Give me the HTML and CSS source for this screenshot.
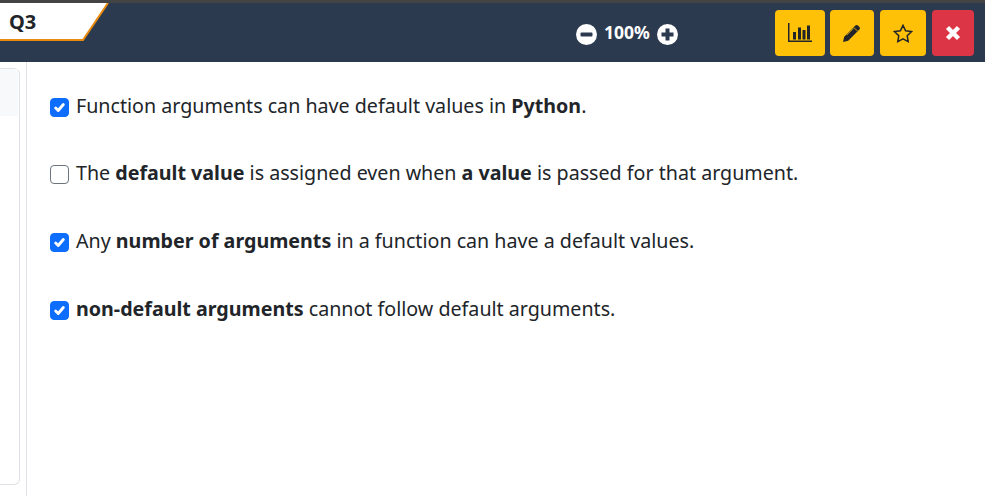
FILE: index.html
```html
<!DOCTYPE html>
<html lang="en">
<head>
    <meta charset="UTF-8">
    <meta name="viewport" content="width=device-width, initial-scale=1.0">
    <title>Quiz</title>
    <link rel="stylesheet" href="styles.css">
</head>
<body>
    <header class="top-bar">
        <div class="tab">
            <svg class="tab-shape" width="110" height="38" viewBox="0 0 110 38">
                <polygon points="0,0 108,0 83,37 0,37" fill="#fff"/>
                <polyline points="0,37 83,37 108,0" fill="none" stroke="#e88a0c" stroke-width="2"/>
            </svg>
            <span class="tab-label">Q3</span>
        </div>
        <div class="zoom">
            <svg class="zoom-icon" width="21" height="21" viewBox="0 0 21 21">
                <circle cx="10.5" cy="10.5" r="10.5" fill="#fff"/>
                <rect x="4.5" y="8.5" width="12" height="4" rx="1" fill="#2c3a50"/>
            </svg>
            <span class="zoom-value">100%</span>
            <svg class="zoom-icon" width="21" height="21" viewBox="0 0 21 21">
                <circle cx="10.5" cy="10.5" r="10.5" fill="#fff"/>
                <path d="M4.5 8.5h4v-4h4v4h4v4h-4v4h-4v-4h-4z" fill="#2c3a50"/>
            </svg>
        </div>
        <div class="actions">
            <button class="btn btn-stats">
                <svg width="24" height="20" viewBox="0 0 24 20">
                    <path d="M0 0h1.5v17.5H24V19H0z" fill="#212529"/>
                    <rect x="5" y="9" width="3" height="7.5" fill="#212529"/>
                    <rect x="10" y="4.5" width="3" height="12" fill="#212529"/>
                    <rect x="14.5" y="7" width="3" height="9.5" fill="#212529"/>
                    <rect x="19" y="2.5" width="3" height="14" fill="#212529"/>
                </svg>
            </button>
            <button class="btn btn-edit">
                <svg width="18" height="18" viewBox="0 0 18 18">
                    <path d="M0 18l1.2-5.2L12.4 1.6c.8-.8 1.8-.8 2.6 0l1.4 1.4c.8.8.8 1.8 0 2.6L5.2 16.8z" fill="#212529"/>
                    <path d="M11 3.6l3.4 3.4M3.6 11.2L10.4 4.4" stroke="#ffc107" stroke-width=".8" fill="none"/>
                </svg>
            </button>
            <button class="btn btn-star">
                <svg width="20" height="19" viewBox="0 0 20 19">
                    <path d="M10 1.4l2.6 5.4 5.9.8-4.3 4.1 1 5.9-5.2-2.8-5.2 2.8 1-5.9-4.3-4.1 5.9-.8z" fill="none" stroke="#212529" stroke-width="1.5" stroke-linejoin="miter"/>
                </svg>
            </button>
            <button class="btn btn-close">
                <svg width="16" height="16" viewBox="0 0 16 16">
                    <path d="M2.5 2.5l11 11M13.5 2.5l-11 11" stroke="#fff" stroke-width="4.4"/>
                </svg>
            </button>
        </div>
    </header>
    <div class="main">
        <aside class="side-panel">
            <div class="side-item"></div>
        </aside>
        <section class="options">
            <label class="option">
                <input type="checkbox" checked>
                <span>Function arguments can have default values in <b>Python</b>.</span>
            </label>
            <label class="option">
                <input type="checkbox">
                <span>The <b>default value</b> is assigned even when <b>a value</b> is passed for that argument.</span>
            </label>
            <label class="option">
                <input type="checkbox" checked>
                <span>Any <b>number of arguments</b> in a function can have a default values.</span>
            </label>
            <label class="option">
                <input type="checkbox" checked>
                <span><b>non-default arguments</b> cannot follow default arguments.</span>
            </label>
        </section>
    </div>
</body>
</html>
```

FILE: styles.css
```css
* {
    box-sizing: border-box;
}
html, body {
    height: 100%;
}
body {
    margin: 0;
    display: flex;
    flex-direction: column;
    overflow: hidden;
    background-color: #fff;
    color: #212529;
    font-family: "Noto Sans", "Open Sans", sans-serif;
}
.top-bar {
    position: relative;
    flex: none;
    height: 62px;
    display: flex;
    align-items: flex-start;
    justify-content: flex-end;
    background-color: #2c3a50;
    border-top: 3px solid #444;
}
.tab {
    position: absolute;
    left: 0;
    top: 0;
    width: 110px;
    height: 38px;
}
.tab-shape {
    display: block;
}
.tab-label {
    position: absolute;
    left: 9px;
    top: 6px;
    font-size: 20px;
    line-height: 26px;
    font-weight: 700;
}
.zoom {
    position: absolute;
    left: 576px;
    top: 21px;
    display: flex;
    align-items: flex-start;
    gap: 7px;
    color: #fff;
}
.zoom-value {
    margin-top: -4px;
    font-size: 17.5px;
    line-height: 24px;
    font-weight: 700;
}
.actions {
    display: flex;
    gap: 5px;
    margin: 7px 11px 0 0;
}
.btn {
    height: 46px;
    padding: 0;
    border: none;
    border-radius: 4px;
    display: flex;
    align-items: center;
    justify-content: center;
    background-color: #ffc107;
}
.btn-stats {
    width: 50px;
}
.btn-edit {
    width: 44px;
}
.btn-star {
    width: 46px;
    margin-left: 1px;
}
.btn-close {
    width: 42px;
    margin-left: 1px;
    background-color: #dc3545;
}
.main {
    flex: 1;
    display: flex;
    min-height: 0;
}
.side-panel {
    flex: none;
    width: 20px;
    height: 417px;
    margin: 6px 6px 0 0;
    border: 1px solid #dee2e6;
    border-left: none;
    border-radius: 0 6px 6px 0;
}
.side-item {
    height: 47px;
    margin-right: 1px;
    background-color: #f8f9fa;
}
.options {
    flex: 1;
    padding: 30px 0 0 23px;
    border-left: 1px solid #dee2e6;
}
.option {
    display: flex;
    align-items: center;
    gap: 7px;
    height: 28px;
    margin-bottom: 40px;
    font-size: 19.66px;
    line-height: 28px;
}
.option:first-child {
    margin-bottom: 39px;
}
.option input {
    appearance: none;
    flex: none;
    width: 19px;
    height: 19px;
    margin: 2px 0 0;
    border: 1.5px solid #6c757d;
    border-radius: 4px;
    background-color: #fff;
}
.option input:checked {
    border-color: #0d6efd;
    background-color: #0d6efd;
    background-image: url("data:image/svg+xml,%3csvg xmlns='http://www.w3.org/2000/svg' viewBox='0 0 20 20'%3e%3cpath fill='none' stroke='%23fff' stroke-linecap='round' stroke-linejoin='round' stroke-width='3.4' d='M5.5 10.5l3 3l6-7'/%3e%3c/svg%3e");
    background-size: 100% 100%;
}
.option b {
    font-weight: 700;
}
```
